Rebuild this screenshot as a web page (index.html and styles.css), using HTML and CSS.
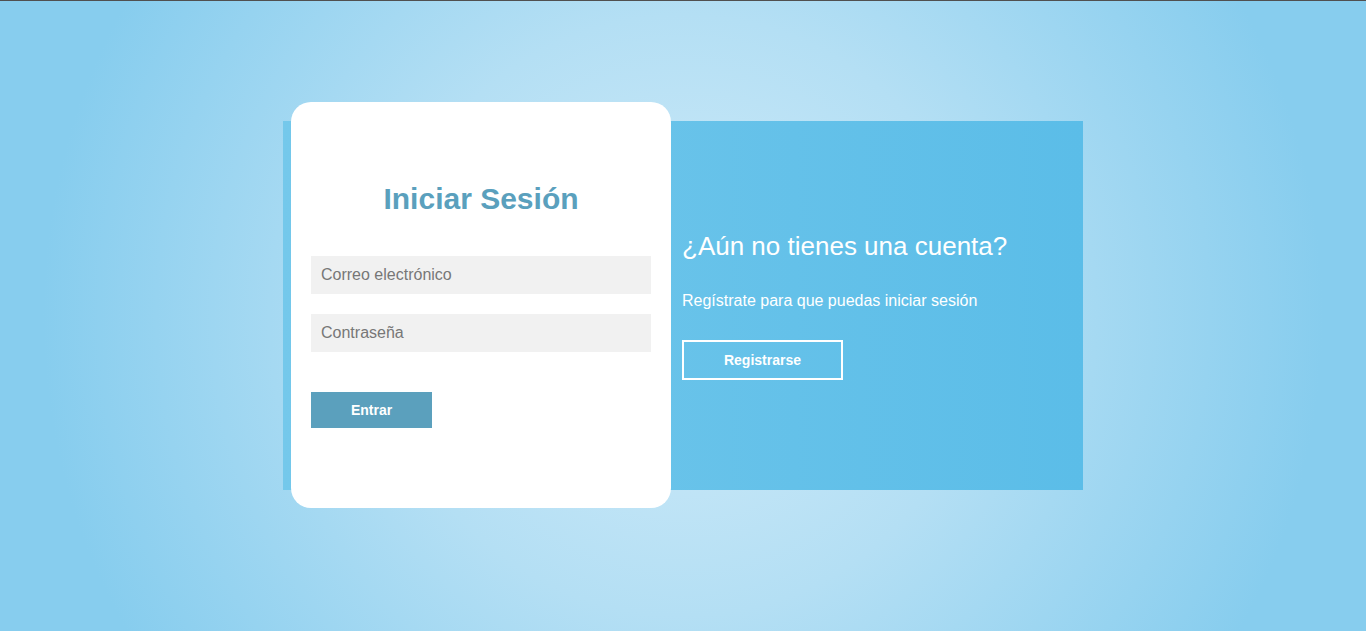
FILE: index.html
```html
<!DOCTYPE html>
<html lang="es">
<head>
<meta charset="utf-8">
<title>Iniciar Sesión</title>
<link rel="stylesheet" href="styles.css">
</head>
<body>
<main class="page">
  <section class="panel">
    <div class="card">
      <h1 class="card-title">Iniciar Sesión</h1>
      <input class="field" type="email" placeholder="Correo electrónico">
      <input class="field" type="password" placeholder="Contraseña">
      <button class="btn-primary" type="button">Entrar</button>
    </div>
    <div class="aside">
      <h2 class="aside-title">¿Aún no tienes una cuenta?</h2>
      <p class="aside-text">Regístrate para que puedas iniciar sesión</p>
      <button class="btn-outline" type="button">Registrarse</button>
    </div>
  </section>
</main>
</body>
</html>
```

FILE: styles.css
```css
* { box-sizing: border-box; }
html, body { height: 100%; }
body {
  margin: 0;
  border-top: 1px solid #505050;
  font-family: "Liberation Sans", Arial, sans-serif;
  background: radial-gradient(circle at 50% 50%, #d0ebf9 0px, #b4dff4 300px, #87cdee 640px);
  overflow: hidden;
}
.page {
  display: flex;
  justify-content: center;
  padding-top: 120px;
}
.panel {
  width: 800px;
  height: 369px;
  display: flex;
  align-items: center;
  background: linear-gradient(90deg, #74c8eb 0%, #5bbde8 100%);
}
.card {
  align-self: flex-start;
  width: 380px;
  height: 406px;
  margin: -19px 0 0 8px;
  background: #fff;
  border-radius: 20px;
  padding: 0 20px;
  display: flex;
  flex-direction: column;
  justify-content: center;
  align-items: flex-start;
  flex-shrink: 0;
}
.card-title {
  width: 100%;
  margin: 0 0 40px;
  text-align: center;
  font-size: 30px;
  font-weight: bold;
  line-height: normal;
  color: #5aa0bd;
}
.field {
  display: block;
  width: 340px;
  height: 38px;
  margin: 0 0 20px;
  padding: 0 10px;
  border: none;
  outline: none;
  background: #f1f1f1;
  font-family: "Liberation Sans", Arial, sans-serif;
  font-size: 16px;
  color: #333;
}
.field::placeholder { color: #777; }
.btn-primary {
  margin-top: 20px;
  width: 121px;
  height: 36px;
  border: none;
  background: #5ba0bd;
  color: #fff;
  font-family: "Liberation Sans", Arial, sans-serif;
  font-size: 14px;
  font-weight: bold;
  padding: 0;
}
.aside {
  padding-left: 11px;
  color: #fff;
}
.aside-title {
  margin: 0 0 30px;
  font-size: 26px;
  font-weight: normal;
  line-height: normal;
}
.aside-text {
  margin: 0 0 30px;
  font-size: 16px;
  line-height: normal;
}
.btn-outline {
  width: 161px;
  height: 40px;
  border: 2px solid #fff;
  background: transparent;
  color: #fff;
  font-family: "Liberation Sans", Arial, sans-serif;
  font-size: 14px;
  font-weight: bold;
  padding: 0;
}
```
